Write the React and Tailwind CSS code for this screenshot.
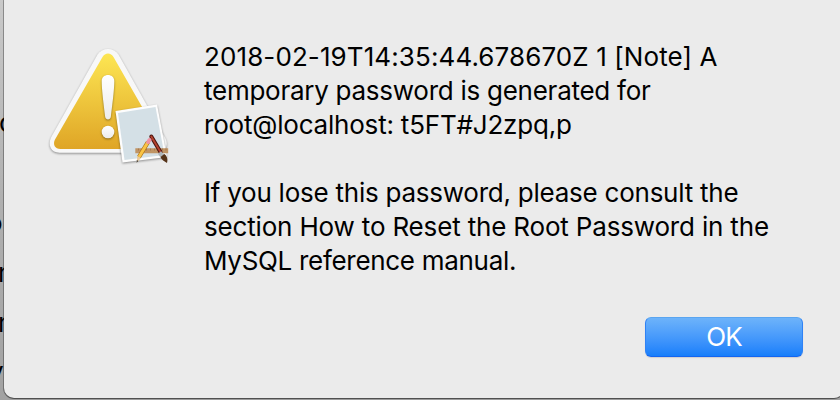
const message = [
  { text: "2018-02-19T14:35:44.678670Z 1 [Note] A", tracking: "tracking-[0.1px]" },
  { text: "temporary password is generated for", tracking: "tracking-[-0.26px]" },
  { text: "root@localhost: t5FT#J2zpq,p", tracking: "tracking-[-0.2px]" },
  { text: "\u00a0", tracking: "" },
  { text: "If you lose this password, please consult the", tracking: "tracking-[-0.24px]" },
  { text: "section How to Reset the Root Password in the", tracking: "tracking-[-0.17px]" },
  { text: "MySQL reference manual.", tracking: "tracking-[-0.3px]" },
];

function WarningIcon() {
  return (
    <svg width="140" height="130" viewBox="40 40 140 130" className="block shrink-0" aria-label="Warning">
      <defs>
        <linearGradient id="gold" x1="0" y1="0" x2="0" y2="1">
          <stop offset="0" stopColor="#fde653" />
          <stop offset="1" stopColor="#dfa526" />
        </linearGradient>
        <linearGradient id="mark" x1="0" y1="0" x2="0" y2="1">
          <stop offset="0" stopColor="#ffffff" />
          <stop offset="1" stopColor="#ececec" />
        </linearGradient>
        <filter id="shadow" x="-20%" y="-20%" width="140%" height="140%" colorInterpolationFilters="sRGB">
          <feDropShadow dx="0" dy="1" stdDeviation="1" floodColor="#000" floodOpacity="0.4" />
        </filter>
      </defs>
      <path
        d="M97.500 54.500C102 47 114 47 118.500 54.500L165.500 138.500C169 146 165 152.700 157 152.700H59.500C51 152.700 47.500 145.500 51 137.500Z"
        fill="#f8f8f8"
        filter="url(#shadow)"
      />
      <path d="M102.500 57C105 52.300 111 52.300 113.500 57L161 140C163.500 145.500 161 149 156 149H60.500C55 149 52.500 144.500 55 139.500Z" fill="url(#gold)" />
      <g filter="url(#shadow)">
        <path d="M101.700 81C101.700 73 114.300 73 114.300 81C114.300 90 112 107 110.800 117C110.300 120.200 105.700 120.200 105.200 117C104 107 101.700 90 101.700 81Z" fill="url(#mark)" />
        <circle cx="108" cy="132" r="6.300" fill="url(#mark)" />
      </g>
      <g filter="url(#shadow)">
        <path d="M115.500 111L157 104.500L167 157L122.500 162.500Z" fill="#fdfdfd" />
      </g>
      <path d="M118 113L155.500 107L164.500 155L124.500 160Z" fill="#d4e0e6" />
      <path d="M135.300 148.200H168.200V153.300H135.300Z" fill="#c09565" />
      <path d="M138.500 148.500v2M142.500 148.500v2M146.500 148.500v2M150.500 148.500v2M154.500 148.500v2M158.500 148.500v2M162.500 148.500v2M166 148.500v2" stroke="#93683f" strokeWidth="0.6" />
      <path d="M151.300 136.500L160.500 152" stroke="#4d1713" strokeWidth="4" strokeLinecap="round" />
      <path d="M151.300 136.500L160.500 152" stroke="#b5432e" strokeWidth="1.800" strokeLinecap="round" />
      <path d="M159.500 152.500L162 156" stroke="#aeb5b9" strokeWidth="4" />
      <path d="M160.500 157L164.200 154C167.500 156 168 160 167 163C164.500 161.500 161.500 160 160.500 157Z" fill="#553318" />
      <path d="M148 142L139 157" stroke="#a66b10" strokeWidth="4.300" />
      <path d="M148 142L139 157" stroke="#f9c445" strokeWidth="3.100" />
      <path d="M149.500 140L148.200 142" stroke="#ef93a4" strokeWidth="4" strokeLinecap="round" />
      <path d="M137.200 156L140.900 158.200L136.800 162.500Z" fill="#eacb9c" />
      <path d="M136.900 160L138.300 160.900L136.600 162.700Z" fill="#333" />
    </svg>
  );
}

function WindowBehind() {
  return (
    <div className="flex h-full w-1 shrink-0 flex-col items-start overflow-hidden pt-[106px] text-[26px] leading-[34px]">
      <span className="-ml-px">c</span>
      <span className="mt-[66px] -ml-[13px]">o</span>
      <span className="mt-[16px] -ml-[2px]">n</span>
      <span className="mt-[16px] -ml-[2px]">n</span>
      <span className="mt-[15px] -ml-[11px]">y</span>
    </div>
  );
}

export default function App() {
  return (
    <div className="flex h-[400px] w-[840px] overflow-hidden bg-linear-to-b from-[#c9c9c9] via-[#b0b0b0] to-[#a2a2a2] font-[Inter,'Liberation_Sans',sans-serif] text-black">
      <WindowBehind />
      <main className="flex h-[398px] w-[840px] shrink-0 flex-col rounded-b-[10px] bg-[#ebebeb] shadow-[0_0_0_1px_rgba(0,0,0,0.28),0_1px_1px_0_rgba(0,0,0,0.35)]">
        <div className="flex gap-6 pl-9 pt-10">
          <WarningIcon />
          <div className="text-[26px] leading-[34px] whitespace-nowrap">
            {message.map((line, i) => (
              <div key={i} className={line.tracking}>{line.text}</div>
            ))}
          </div>
        </div>
        <button className="mt-[39px] mr-[41px] flex h-10 w-[158px] items-center justify-center self-end rounded-md border border-t-[#5aa5f0] border-x-[#2f82f5] border-b-[#1465f0] bg-linear-to-b from-[#6db3fa] to-[#157efb] text-[26px] text-white shadow-[0_1px_1px_rgba(0,0,0,0.12)]">
          <span className="-mt-0.5 tracking-[-0.9px]">OK</span>
        </button>
      </main>
    </div>
  );
}
